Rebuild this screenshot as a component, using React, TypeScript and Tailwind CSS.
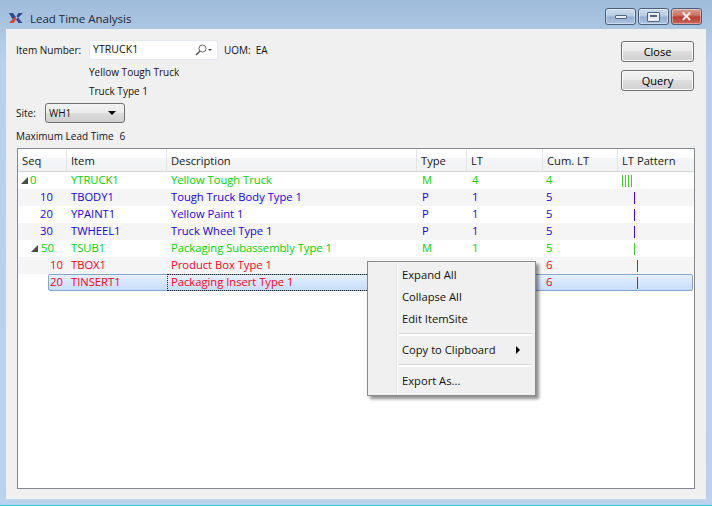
const green = "text-[#00d000]";
const blue = "text-[#2000e0]";
const red = "text-[#ff0018]";

const rows = [
  { seq: "0", pad: "pl-[15px]", arrow: "ml-[3px]", item: "YTRUCK1", desc: "Yellow Tough Truck", type: "M", lt: "4", cum: "4", bars: 4, barPad: "pl-[4px]", barColor: "bg-[#3ccc28]", color: green },
  { seq: "10", pad: "pl-[22px]", item: "TBODY1", desc: "Tough Truck Body Type 1", type: "P", lt: "1", cum: "5", bars: 1, barPad: "pl-[16px]", barColor: "bg-[#4a00ff]", color: blue },
  { seq: "20", pad: "pl-[22px]", item: "YPAINT1", desc: "Yellow Paint 1", type: "P", lt: "1", cum: "5", bars: 1, barPad: "pl-[16px]", barColor: "bg-[#4a00ff]", color: blue },
  { seq: "30", pad: "pl-[22px]", item: "TWHEEL1", desc: "Truck Wheel Type 1", type: "P", lt: "1", cum: "5", bars: 1, barPad: "pl-[16px]", barColor: "bg-[#4a00ff]", color: blue },
  { seq: "50", pad: "pl-[22px]", arrow: "ml-[13px]", item: "TSUB1", desc: "Packaging Subassembly Type 1", type: "M", lt: "1", cum: "5", bars: 1, barPad: "pl-[16px]", barColor: "bg-[#3ccc28]", color: green },
  { seq: "10", pad: "pl-[32px]", item: "TBOX1", desc: "Product Box Type 1", type: "P", lt: "1", cum: "6", bars: 1, barPad: "pl-[19px]", barColor: "bg-[#d81818]", color: red },
  { seq: "20", pad: "pl-[32px]", item: "TINSERT1", desc: "Packaging Insert Type 1", type: "P", lt: "1", cum: "6", bars: 1, barPad: "pl-[19px]", barColor: "bg-[#d81818]", color: red, selected: true },
];

const columns = ["Seq", "Item", "Description", "Type", "LT", "Cum. LT", "LT Pattern"];
const grid = "grid grid-cols-[49px_100px_250px_50px_76px_75px_1fr]";

function Btn({ label }: { label: string }) {
  return (
    <button className="h-[21px] w-[73px] rounded-[3px] border border-[#707070] bg-[linear-gradient(#f2f2f2_0%,#ebebeb_48%,#dddddd_50%,#cfcfcf_100%)] pt-[1px] text-center text-[11px] text-black shadow-[inset_0_0_0_1px_#fbfbfb]">
      {label}
    </button>
  );
}

function CaptionButton({ w, red, children }: { w: string; red?: boolean; children: React.ReactNode }) {
  return (
    <div
      className={`flex h-[17px] items-center justify-center rounded-[3px] border border-[#4d5e78] shadow-[inset_0_0_0_1px_#ffffff66] ${w} ${
        red
          ? "bg-[linear-gradient(#d9a093_0%,#c9695c_48%,#b8392e_52%,#c9685c_100%)]"
          : "bg-[linear-gradient(#cddcee_0%,#b4cae3_48%,#94aecf_52%,#abc5e2_100%)]"
      }`}
    >
      {children}
    </div>
  );
}

function Triangle({ className }: { className: string }) {
  return (
    <svg width="7" height="7" viewBox="0 0 7 7" className={className}>
      <path d="M7 0V7H0Z" fill="#4a4a4a" />
    </svg>
  );
}

function Row({ r, odd }: { r: (typeof rows)[number]; odd: boolean }) {
  return (
    <div className={`${grid} h-[17px] items-center pb-[1px] ${r.color} ${odd ? "bg-[#f5f5f5]" : "bg-white"}`}>
      <div className="flex h-full items-center">
        {r.arrow && <Triangle className={`${r.arrow} mr-[-7px] mt-[1px] shrink-0`} />}
        <span className={r.arrow ? (r.seq === "0" ? "pl-[9px]" : "pl-[10px]") : r.pad}>{r.seq}</span>
      </div>
      <div className="pl-[4px]">{r.item}</div>
      <div className="pl-[4px]">{r.desc}</div>
      <div className="pl-[5px]">{r.type}</div>
      <div className="pl-[5px]">{r.lt}</div>
      <div className="pl-[3px]">{r.cum}</div>
      <div className={`flex gap-[2px] pt-[1px] ${r.barPad}`}>
        {Array.from({ length: r.bars }).map((_, i) => (
          <div key={i} className={`h-[12px] w-px ${r.barColor}`} />
        ))}
      </div>
    </div>
  );
}

function SelectedRow({ r }: { r: (typeof rows)[number] }) {
  return (
    <div className={`${grid} relative h-[17px] items-center pb-[1px] ${r.color}`}>
      <div className="absolute inset-y-0 left-[30px] right-[1px] rounded-[2px] border border-[#86a5cf] bg-[linear-gradient(#e6f0fd,#c6defa)]" />
      <div className={`relative ${r.pad}`}>{r.seq}</div>
      <div className="relative pl-[4px]">{r.item}</div>
      <div className="relative h-[17px] border border-dotted border-[#222] pl-[3px] leading-[14px]">{r.desc}</div>
      <div className="relative pl-[5px]">{r.type}</div>
      <div className="relative pl-[5px]">{r.lt}</div>
      <div className="relative pl-[3px]">{r.cum}</div>
      <div className={`relative flex pt-[1px] ${r.barPad}`}>
        <div className={`h-[12px] w-px ${r.barColor}`} />
      </div>
    </div>
  );
}

function MenuItem({ label, arrow }: { label: string; arrow?: boolean }) {
  return (
    <div className="flex h-[22px] items-center justify-between pl-[34px] pr-[15px] text-[#111]">
      <span>{label}</span>
      {arrow && <span className="h-0 w-0 border-y-[4px] border-l-[4px] border-y-transparent border-l-black" />}
    </div>
  );
}

function Sep() {
  return <div className="my-[3px] ml-[31px] mr-[3px] h-[3px] border-t border-[#d6d6d6] bg-white" />;
}

export default function App() {
  return (
    <div
      className="flex h-[506px] w-[712px] flex-col overflow-hidden border-b border-[#35bfe0] bg-[linear-gradient(#9fbcdb_0%,#b9d1ea_12%,#bad2eb_100%)] text-[11.2px] text-[#111]"
      style={{ fontFamily: '"Open Sans", "Noto Sans", sans-serif' }}
    >
      <div className="flex h-[29px] shrink-0 items-center pl-[9px] pr-[4px] pt-[8px]">
        <svg width="14" height="11" viewBox="0 0 14 11" className="mr-[7px]">
          <path d="M0 0H4L7 4L4.5 7L2.5 4.5Z" fill="#2e4a8c" />
          <path d="M14 0H9.5L7.5 3L9 5Z" fill="#2e4a8c" />
          <path d="M0 10H4.5L7.5 6L5.5 4Z" fill="#d8472a" />
          <path d="M13.5 10H9.5L7 6.5L9 4.5Z" fill="#2e4a8c" />
        </svg>
        <span className="text-[11.5px] text-[#1c2a3a]">Lead Time Analysis</span>
        <div className="mb-[4px] ml-auto mr-[6px] flex gap-[2px]">
          <CaptionButton w="w-[31px]">
            <div className="h-[4px] w-[12px] rounded-[1px] border border-[#55657a] bg-[#e8edf3]" />
          </CaptionButton>
          <CaptionButton w="w-[31px]">
            <div className="h-[10px] w-[13px] rounded-[1px] border border-[#55657a] bg-[#e8edf3] p-[2px]">
              <div className="h-[2px] w-full bg-[#55657a]" />
            </div>
          </CaptionButton>
          <CaptionButton w="w-[31px]" red>
            <span className="text-[13px] leading-none font-bold text-[#f4eeee]">✕</span>
          </CaptionButton>
        </div>
      </div>

      <div className="relative mx-[6px] flex h-[470px] flex-col bg-[#f0f0f0] pl-[10px] pr-[11px]">
        <div className="flex justify-between pt-[11px] text-[10px]">
          <div>
            <div className="flex h-[20px] items-center">
              <span className="w-[73px] whitespace-nowrap">Item Number:</span>
              <div className="flex h-[20px] w-[129px] items-center justify-between rounded-[2px] border border-[#e3e9ef] bg-white pl-[3px] pr-[3px]">
                <span className="text-[10.6px]">YTRUCK1</span>
                <svg width="20" height="12" viewBox="0 0 20 12">
                  <circle cx="8.5" cy="4.5" r="3.5" fill="none" stroke="#666" />
                  <path d="M6 7L2 11" stroke="#555" strokeWidth="1.5" />
                  <path d="M14 5H18L16 7Z" fill="#444" />
                </svg>
              </div>
              <span className="ml-[6px]">UOM:</span>
              <span className="ml-[5px]">EA</span>
            </div>
            <div className="mt-[3px] pl-[73px] leading-[19px]">
              <div>Yellow Tough Truck</div>
              <div>Truck Type 1</div>
            </div>
            <div className="mt-[2px] flex h-[20px] items-center">
              <span className="w-[29px]">Site:</span>
              <div className="flex h-[20px] w-[80px] items-center justify-between rounded-[3px] border border-[#707070] bg-[linear-gradient(#f2f2f2_0%,#ebebeb_48%,#dddddd_50%,#cfcfcf_100%)] pl-[3px] pr-[8px]">
                <span>WH1</span>
                <span className="h-0 w-0 border-x-[4px] border-t-[4px] border-x-transparent border-t-black" />
              </div>
            </div>
            <div className="mt-[5px] flex h-[16px] items-center gap-[6px]">
              <span>Maximum Lead Time</span>
              <span>6</span>
            </div>
          </div>
          <div className="flex flex-col gap-[8px] pr-[1px] pt-[1px]">
            <Btn label="Close" />
            <Btn label="Query" />
          </div>
        </div>

        <div className="ml-[1px] mt-[4px] h-[341px] w-[678px] border border-[#828790] bg-white">
          <div className={`${grid} h-[23px] border-b border-[#d5d5d5] bg-[linear-gradient(#ffffff_0%,#ffffff_40%,#f4f5f6_42%,#f2f3f5_100%)] text-[#1a1a1a]`}>
            {columns.map((c) => (
              <div key={c} className="flex items-center border-r border-[#e3e5e8] pl-[4px] pt-[2px] text-[11.2px] last:border-r-0">
                {c}
              </div>
            ))}
          </div>
          {rows.map((r, i) =>
            r.selected ? <SelectedRow key={i} r={r} /> : <Row key={i} r={r} odd={i % 2 === 1} />
          )}
        </div>

        <div className="absolute left-[361px] top-[232px] h-[135px] w-[169px] border border-[#8a8a8a] bg-[#f0f0f0] py-[2px] shadow-[3px_3px_3px_#00000070]">
          <div className="absolute inset-y-[1px] left-[28px] w-[2px] border-l border-[#e2e3e3] bg-white" />
          <div className="relative">
            <MenuItem label="Expand All" />
            <MenuItem label="Collapse All" />
            <MenuItem label="Edit ItemSite" />
            <Sep />
            <MenuItem label="Copy to Clipboard" arrow />
            <Sep />
            <MenuItem label="Export As..." />
          </div>
        </div>
      </div>
    </div>
  );
}
